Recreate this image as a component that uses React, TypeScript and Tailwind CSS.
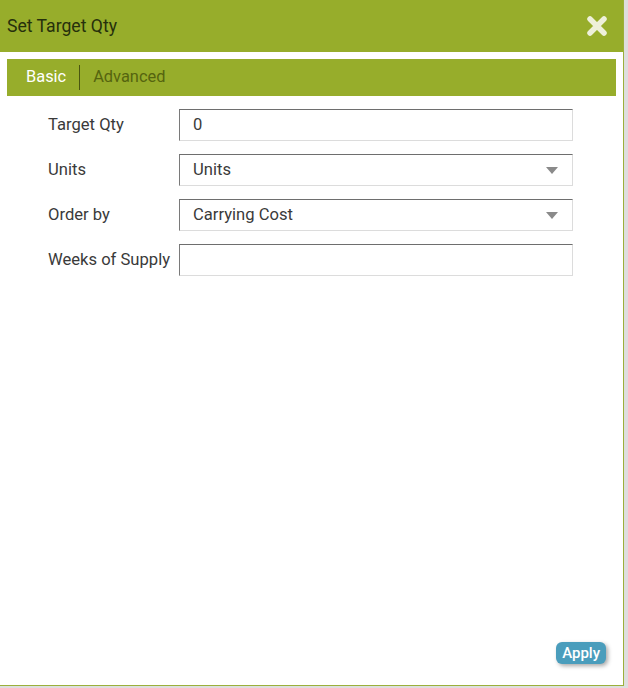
import { useState } from "react";

const fields = [
  { label: "Target Qty", value: "0", select: false },
  { label: "Units", value: "Units", select: true },
  { label: "Order by", value: "Carrying Cost", select: true },
  { label: "Weeks of Supply", value: "", select: false },
];

function Caret() {
  return (
    <svg width="12" height="7" viewBox="0 0 12 7" className="shrink-0">
      <path d="M0 0h12L6 7z" fill="#8a8a8a" />
    </svg>
  );
}

export default function App() {
  const [tab, setTab] = useState("basic");

  return (
    <div className="h-[688px] w-[628px] bg-[#dedede] font-['Roboto',sans-serif]">
      <div className="flex h-[686px] w-[624px] flex-col border-b border-r border-[#9bb03a] bg-white">
        {/* Title bar */}
        <div className="flex h-[52px] shrink-0 items-center justify-between bg-[#97ad2b] pl-[7px] pr-[15px]">
          <span className="text-[17.6px] text-[#26300c]">Set Target Qty</span>
          <svg width="22" height="22" viewBox="0 0 22 22">
            <path
              d="M4 4L18 18M18 4L4 18"
              stroke="#eef0da"
              strokeWidth="5.5"
              strokeLinecap="round"
            />
          </svg>
        </div>

        {/* Tabs */}
        <div className="mx-[7px] mt-[7px] flex h-[37px] items-center bg-[#97ad2b] pl-[19px]">
          <button
            onClick={() => setTab("basic")}
            className={`pr-[13px] text-[16.4px] ${tab === "basic" ? "text-white" : "text-[#55640f]"}`}
          >
            Basic
          </button>
          <div className="h-[25px] w-px bg-[#4a5610]" />
          <button
            onClick={() => setTab("advanced")}
            className={`pl-[13px] text-[16.4px] ${tab === "advanced" ? "text-white" : "text-[#55640f]"}`}
          >
            Advanced
          </button>
        </div>

        {/* Form */}
        <div className="mt-[13px] flex flex-col gap-[13px] pl-[48px]">
          {fields.map((f) => (
            <div key={f.label} className="flex items-center">
              <label className="w-[131px] text-[16.6px] text-[#3a3a3a]">{f.label}</label>
              <div className="flex h-[32px] w-[394px] items-center justify-between border border-b-[#dcdcdc] border-l-[#7a7a7a] border-r-[#dcdcdc] border-t-[#6e6e6e] pl-[13px] pr-[14px] text-[16.6px] text-[#3a3a3a]">
                <span>{f.value}</span>
                {f.select && <Caret />}
              </div>
            </div>
          ))}
        </div>

        <div className="flex-1" />

        <div className="flex justify-end pb-[21px] pr-[17px]">
          <button className="h-[22px] rounded-[6px] bg-[#4a9dbc] px-[6px] text-[15px] font-medium leading-[22px] text-white shadow-[2px_2px_4px_rgba(0,0,0,0.35)]">
            Apply
          </button>
        </div>
      </div>
    </div>
  );
}
